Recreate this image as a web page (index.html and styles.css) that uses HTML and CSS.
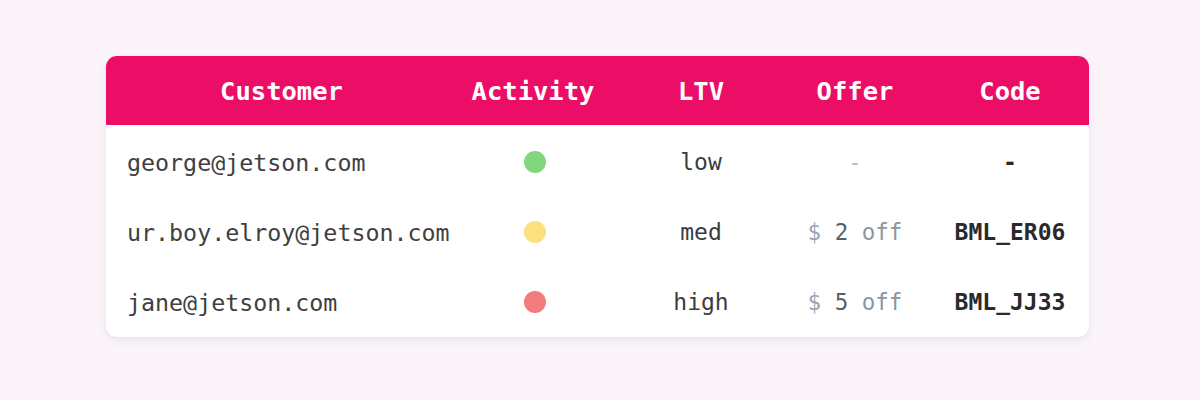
FILE: index.html
```html
<!DOCTYPE html>
<html>
<head>
<meta charset="utf-8">
<link rel="stylesheet" href="styles.css">
</head>
<body>
<div class="page">
  <div class="card">
    <div class="row head">
      <div class="cell c-customer center">Customer</div>
      <div class="cell center">Activity</div>
      <div class="cell center">LTV</div>
      <div class="cell center">Offer</div>
      <div class="cell center c-code">Code</div>
    </div>
    <div class="body">
      <div class="row">
        <div class="cell c-customer email">george@jetson.com</div>
        <div class="cell center"><span class="dot green"></span></div>
        <div class="cell center ltv">low</div>
        <div class="cell center offer dim">-</div>
        <div class="cell center c-code code">-</div>
      </div>
      <div class="row">
        <div class="cell c-customer email">ur.boy.elroy@jetson.com</div>
        <div class="cell center"><span class="dot yellow"></span></div>
        <div class="cell center ltv">med</div>
        <div class="cell center offer"><span class="dollar">$</span> <span class="num">2</span> off</div>
        <div class="cell center c-code code">BML_ER06</div>
      </div>
      <div class="row">
        <div class="cell c-customer email">jane@jetson.com</div>
        <div class="cell center"><span class="dot red"></span></div>
        <div class="cell center ltv">high</div>
        <div class="cell center offer"><span class="dollar">$</span> <span class="num">5</span> off</div>
        <div class="cell center c-code code">BML_JJ33</div>
      </div>
    </div>
  </div>
</div>
</body>
</html>
```
FILE: styles.css
```css
* { box-sizing: border-box; }
html, body {
  margin: 0;
  padding: 0;
  background: #fbf5fa;
  width: 1200px;
  height: 400px;
  overflow: hidden;
}
.page {
  padding: 56px 0 0 106px;
}
.card {
  width: 983px;
  background: #ffffff;
  border-radius: 11px;
  overflow: hidden;
  box-shadow: 0 3px 10px rgba(120, 90, 120, 0.12), 0 0 2px rgba(0,0,0,0.06);
  font-family: "DejaVu Sans Mono", "Liberation Mono", monospace;
}
.row {
  display: grid;
  grid-template-columns: 351px 152px 184px 124px 172px;
  align-items: center;
  height: 70px;
}
.row.head {
  height: 69px;
  background: #ec0e66;
  color: #ffffff;
  font-size: 25.5px;
  font-weight: bold;
}
.body {
  padding-top: 2px;
}
.cell.center {
  text-align: center;
}
.c-code {
  padding-left: 14px;
}
.email {
  padding-left: 21px;
  font-size: 23.3px;
  color: #404040;
}
.ltv {
  font-size: 23px;
  color: #3c3c3c;
}
.offer {
  font-size: 22.5px;
  color: #8a94a2;
}
.offer.dim {
  color: #b8bcc4;
}
.dollar {
  color: #9ca4b0;
}
.num {
  color: #5a5f66;
}
.code {
  font-size: 23px;
  font-weight: bold;
  color: #2a2a2a;
}
.dot {
  display: inline-block;
  width: 22px;
  height: 22px;
  border-radius: 50%;
  vertical-align: middle;
  margin-left: 4px;
}
.dot.green { background: #80d77e; }
.dot.yellow { background: #fde07b; }
.dot.red { background: #f47b7b; }
```
